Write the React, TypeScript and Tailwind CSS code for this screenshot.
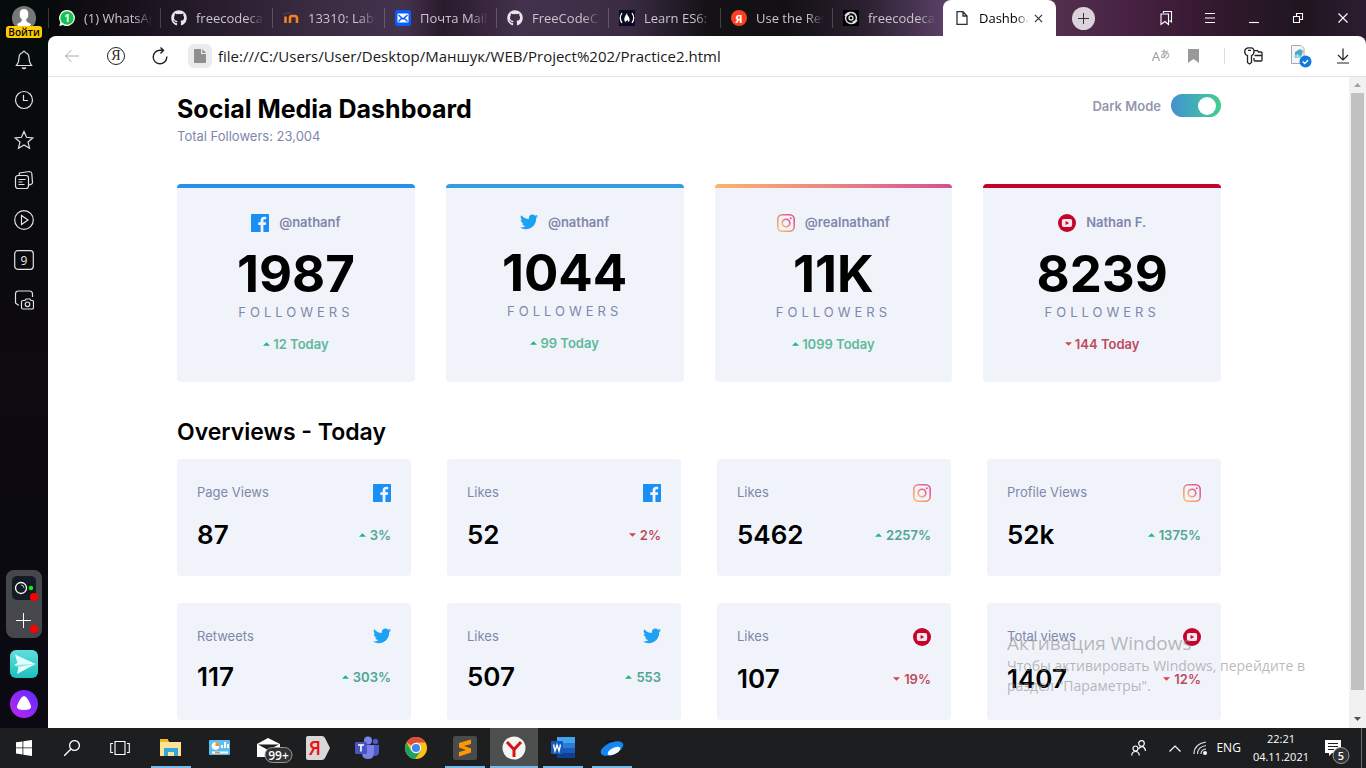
import type { ReactNode } from "react";
import { FaGithub } from "react-icons/fa";

type Network = "facebook" | "twitter" | "instagram" | "youtube";

function NetworkIcon({ name }: { name: Network }) {
  if (name === "facebook")
    return (
      <svg className="w-[18px] shrink-0" viewBox="0 0 20 20" aria-hidden="true">
        <path fill="#198ff5" d="M18.896 0H1.104C.494 0 0 .494 0 1.104v17.793C0 19.506.494 20 1.104 20h9.58v-7.745H8.076V9.237h2.606V7.01c0-2.583 1.578-3.99 3.883-3.99 1.104 0 2.052.082 2.329.119v2.7h-1.598c-1.254 0-1.496.597-1.496 1.47v1.928h2.989l-.39 3.018h-2.6V20h5.098c.608 0 1.102-.494 1.102-1.104V1.104C20 .494 19.506 0 18.896 0z" />
      </svg>
    );
  if (name === "twitter")
    return (
      <svg className="h-4 w-[18px] shrink-0" viewBox="0 0 20 17" aria-hidden="true">
        <path fill="#1da1f2" d="M20 2.172a8.192 8.192 0 01-2.357.646 4.11 4.11 0 001.805-2.27 8.22 8.22 0 01-2.606.996A4.096 4.096 0 0013.847.248c-2.65 0-4.596 2.472-3.998 5.037A11.648 11.648 0 011.392 1 4.109 4.109 0 002.662 6.478 4.086 4.086 0 01.8 5.963c-.045 1.901 1.318 3.679 3.291 4.075a4.113 4.113 0 01-1.853.07 4.106 4.106 0 003.833 2.849A8.25 8.25 0 010 14.658a11.616 11.616 0 006.29 1.843c7.618 0 11.922-6.434 11.662-12.205A8.354 8.354 0 0020 2.172z" />
      </svg>
    );
  if (name === "instagram")
    return (
      <svg className="w-[18px] shrink-0" viewBox="0 0 20 20" aria-hidden="true">
        <defs>
          <linearGradient id="insta" x1="0" y1="1" x2="1" y2="0">
            <stop offset="0" stopColor="#fdc468" />
            <stop offset="1" stopColor="#df4996" />
          </linearGradient>
        </defs>
        <g fill="none" stroke="url(#insta)" strokeWidth="1.8">
          <rect x="0.9" y="0.9" width="18.2" height="18.2" rx="5" />
          <circle cx="10" cy="10" r="4.2" />
        </g>
        <circle cx="15.3" cy="4.7" r="1.2" fill="#e2608c" />
      </svg>
    );
  return (
    <svg className="w-[18px] shrink-0" viewBox="0 0 20 20" aria-hidden="true">
      <circle cx="10" cy="10" r="10" fill="#c4032a" />
      <rect x="4.3" y="5.6" width="11.4" height="8.8" rx="2.2" fill="#f5e6ee" />
      <path d="M8.5 7.7v4.6l3.8-2.3z" fill="#c4032a" />
    </svg>
  );
}

function Arrow({ up }: { up: boolean }) {
  return (
    <svg className="h-1 w-[7px] shrink-0" viewBox="0 0 8 4" aria-hidden="true">
      <path d={up ? "M0 4h8L4 0z" : "M0 0h8L4 4z"} fill={up ? "#1eb589" : "#dc414c"} />
    </svg>
  );
}

const followerCards: { network: Network; handle: string; count: string; change: string; up: boolean; bar: string }[] = [
  { network: "facebook", handle: "@nathanf", count: "1987", change: "12 Today", up: true, bar: "bg-[#288fe8]" },
  { network: "twitter", handle: "@nathanf", count: "1044", change: "99 Today", up: true, bar: "bg-[#349ce0]" },
  { network: "instagram", handle: "@realnathanf", count: "11K", change: "1099 Today", up: true, bar: "bg-linear-to-r from-[#fdb26c] to-[#d54f92]" },
  { network: "youtube", handle: "Nathan F.", count: "8239", change: "144 Today", up: false, bar: "bg-[#c4032a]" },
];

const overviewCards: { network: Network; label: string; value: string; change: string; up: boolean }[] = [
  { network: "facebook", label: "Page Views", value: "87", change: "3%", up: true },
  { network: "facebook", label: "Likes", value: "52", change: "2%", up: false },
  { network: "instagram", label: "Likes", value: "5462", change: "2257%", up: true },
  { network: "instagram", label: "Profile Views", value: "52k", change: "1375%", up: true },
  { network: "twitter", label: "Retweets", value: "117", change: "303%", up: true },
  { network: "twitter", label: "Likes", value: "507", change: "553", up: true },
  { network: "youtube", label: "Likes", value: "107", change: "19%", up: false },
  { network: "youtube", label: "Total views", value: "1407", change: "12%", up: false },
];

function Dashboard() {
  return (
    <main className="min-w-0 flex-1 overflow-hidden pr-32 pl-[129px] pt-4 font-['Inter',sans-serif]">
      <header className="flex items-start justify-between">
        <div>
          <h1 className="text-[25px] leading-8 font-bold text-black">Social Media Dashboard</h1>
          <p className="mt-[3px] text-[13px] leading-4 text-[#8087ab]">Total Followers: 23,004</p>
        </div>
        <div className="mt-px flex items-center gap-[10px]">
          <label htmlFor="dark" className="text-[13px] leading-4 font-semibold text-[#9497af]">Dark Mode</label>
          <input
            id="dark"
            type="checkbox"
            defaultChecked
            className="flex h-[23px] w-[50px] appearance-none items-center rounded-full bg-linear-to-r from-[#4491cf] to-[#43cd91] px-[5px] before:size-[18px] before:rounded-full before:bg-white before:content-[''] checked:justify-end"
          />
        </div>
      </header>

      <section className="mt-10 grid grid-cols-4 gap-[31px]">
        {followerCards.map((c) => (
          <article key={c.network} className="flex flex-col overflow-hidden rounded-[4px] bg-[#f0f3fa] text-center">
            <div className={`h-1 ${c.bar}`} />
            <div className="flex flex-col items-center px-5 pt-[26px] pb-[30px]">
              <div className="flex items-start gap-[10px]">
                <NetworkIcon name={c.network} />
                <span className="text-[13px] leading-[17px] font-semibold text-[#8087ab]">{c.handle}</span>
              </div>
              <strong className="mt-3 text-[51px] leading-[60px] font-bold text-black">{c.count}</strong>
              <span className="text-[13px] leading-4 tracking-[4px] text-[#8087ab]">FOLLOWERS</span>
              <span className={`mt-4 flex items-center gap-[3px] text-[13px] leading-4 font-semibold ${c.up ? "text-[#5fb99a]" : "text-[#bf4a5c]"}`}>
                <Arrow up={c.up} />
                {c.change}
              </span>
            </div>
          </article>
        ))}
      </section>

      <h2 className="mt-9 text-[23px] leading-7 font-semibold text-black">Overviews - Today</h2>
      <section className="mt-[13px] grid grid-cols-4 gap-x-9 gap-y-[27px]">
        {overviewCards.map((c) => (
          <article key={c.label + c.value} className="rounded-[4px] bg-[#f0f3fa] px-5 py-[25px]">
            <div className="flex items-start justify-between">
              <span className="text-[13px] leading-4 text-[#8087ab]">{c.label}</span>
              <NetworkIcon name={c.network} />
            </div>
            <div className="mt-[17px] flex items-center justify-between">
              <strong className="text-[26px] leading-8 font-semibold text-black">{c.value}</strong>
              <span className={`flex items-center gap-1 text-[13px] leading-4 font-semibold ${c.up ? "text-[#4da593]" : "text-[#bf4a5c]"}`}>
                <Arrow up={c.up} />
                {c.change}
              </span>
            </div>
          </article>
        ))}
      </section>
    </main>
  );
}

const tabs: { title: string; icon: ReactNode }[] = [
  {
    title: "(1) WhatsApp",
    icon: (
      <svg viewBox="0 0 16 16" className="size-4">
        <path d="M8 0a8 8 0 11-4 15L.3 16l1-3.8A8 8 0 018 0z" fill="#fff" />
        <circle cx="8" cy="8" r="6.7" fill="#16c350" />
        <text x="8" y="11.7" textAnchor="middle" fontSize="10" fontWeight="700" fill="#fff">1</text>
      </svg>
    ),
  },
  { title: "freecodecamp", icon: <FaGithub className="size-4 text-[#e8e6ea]" /> },
  {
    title: "13310: Lab9",
    icon: (
      <svg viewBox="0 0 16 16" className="size-4" fill="none">
        <path d="M0 5l3-2h5" stroke="#4a3c3c" strokeWidth="1.5" />
        <path d="M2.500 13V6.500M7 13V8q0-2 2-2h2.500q2.500 0 2.500 2.500V13" stroke="#f58220" strokeWidth="2.600" />
      </svg>
    ),
  },
  {
    title: "Почта Mail.ru",
    icon: (
      <svg viewBox="0 0 16 16" className="size-4">
        <rect width="16" height="16" rx="2.500" fill="#0a5cff" />
        <rect x="2.500" y="3.500" width="11" height="9" rx="1" fill="#fff" />
        <path d="M3.500 5l4.500 4 4.500-4M3.500 11.500l3-3M12.500 11.500l-3-3" stroke="#0a5cff" strokeWidth="1.400" fill="none" />
      </svg>
    ),
  },
  { title: "FreeCodeCamp", icon: <FaGithub className="size-4 text-[#e8e6ea]" /> },
  {
    title: "Learn ES6: Use",
    icon: (
      <svg viewBox="0 0 16 16" className="size-4">
        <rect width="16" height="16" fill="#0a0a23" />
        <path d="M3 3Q-.5 8 3 13M13 3q3.500 5 0 10" stroke="#fff" strokeWidth="1.300" fill="none" />
        <path d="M8 3q0 2 1.500 3.500T10.500 11L9 12.500q.8-1.500-.5-2.500-.5 1-1.300 1-.6.5 0 1.500-2-.8-2-3T8 3z" fill="#fff" />
      </svg>
    ),
  },
  {
    title: "Use the Rest",
    icon: <span className="flex size-4 items-center justify-center rounded-full bg-[#fc3f1d] text-[11px] leading-none font-bold text-white">Я</span>,
  },
  {
    title: "freecodecamp",
    icon: (
      <svg viewBox="0 0 16 16" className="size-4" fill="none">
        <rect width="16" height="16" fill="#000" />
        <circle cx="8" cy="8" r="2" stroke="#ddd" strokeWidth="1.400" />
        <path d="M2 6Q4 2 8.500 2.500T13.500 8Q13 11.500 9.500 12M14 10q-2 4-6.500 3.500T2.500 8Q3 4.500 6.500 4" stroke="#ddd" strokeWidth="1.500" />
      </svg>
    ),
  },
];

function TabStrip() {
  return (
    <div className="flex h-9 items-stretch">
      {tabs.map((t, i) => (
        <button key={i} type="button" className="flex w-28 items-center text-left">
          <span className="h-5 w-px bg-white/20" />
          <span className="ml-[10px]">{t.icon}</span>
          <span className="ml-[9px] w-[68px] overflow-hidden mask-r-from-75% text-[13px] leading-5 whitespace-nowrap text-[#c9c3cd]">{t.title}</span>
        </button>
      ))}
      <div className="-ml-px flex w-[113px] items-center rounded-t-lg bg-white">
        <svg viewBox="0 0 12 14" className="ml-[13px] h-[14px] w-3 shrink-0" fill="none" stroke="#26323e" strokeWidth="1.300">
          <path d="M1 .7h6l4 4.300v8.300H1zM7 .7V5h4" />
        </svg>
        <span className="ml-[11px] w-[50px] overflow-hidden mask-r-from-75% text-[13px] leading-5 whitespace-nowrap text-black">Dashboard</span>
        <button type="button" aria-label="Close tab" className="ml-[5px]">
          <svg viewBox="0 0 10 10" className="size-[9px]" stroke="#26323e" strokeWidth="1.300"><path d="M1 1l8 8M9 1L1 9" /></svg>
        </button>
      </div>
      <button type="button" aria-label="New tab" className="ml-4 flex size-[23px] items-center justify-center self-center rounded-full bg-[#dbd3dc]">
        <svg viewBox="0 0 11 11" className="size-[11px]" stroke="#333" strokeWidth="1"><path d="M5.500 0v11M0 5.500h11" /></svg>
      </button>
      <div className="ml-auto flex items-center pr-[15px] text-white">
        {[
          ["Bookmarks", "M5.500 3V1.500h8v10.500l-2-1.500M3 4h7.500v10.500L7 11.500l-4 3z"],
          ["Menu", "M3 3.500h10M3 8h10M3 12.500h10"],
          ["Minimize", "M3 12.500h10"],
          ["Restore", "M6.500 6V3.500h6v6H10M3.500 6.500h6v6h-6z"],
          ["Close", "M3.500 3.500l9 9M12.500 3.500l-9 9"],
        ].map(([label, d]) => (
          <button key={label} type="button" aria-label={label} className="flex w-11 justify-center last:w-auto last:pl-[15px]">
            <svg viewBox="0 0 16 16" className="size-4" fill="none" stroke="currentColor" strokeWidth="1.1"><path d={d} /></svg>
          </button>
        ))}
      </div>
    </div>
  );
}

function Toolbar() {
  return (
    <div className="flex h-[41px] shrink-0 items-center border-b border-[#e3e3e3] pr-[16px] pl-4">
      <button type="button" aria-label="Back" className="w-4">
        <svg viewBox="0 0 16 16" className="size-4" fill="none" stroke="#aaa"><path d="M15 8H1.500M7.500 2l-6 6 6 6" /></svg>
      </button>
      <button type="button" aria-label="Yandex home" className="ml-[27px] flex size-[18px] items-center justify-center rounded-full border border-[#222] font-['Liberation_Serif',serif] text-[14px] leading-none text-[#222]">Я</button>
      <button type="button" aria-label="Reload" className="ml-[26px]">
        <svg viewBox="0 0 18 18" className="size-[18px]" fill="none" stroke="#222" strokeWidth="1.400"><path d="M15.800 9.500A6.800 6.800 0 119 3.200h3M9.500.5L12.500 3.200 9.500 6.500" /></svg>
      </button>
      <span className="ml-[19px] flex size-6 items-center justify-center rounded-md bg-[#ebebeb]">
        <svg viewBox="0 0 12 14" className="h-[14px] w-3" fill="#8f8f8f"><path d="M1 0h6v5h5v8q0 1-1 1H1q-1 0-1-1V1q0-1 1-1zM8.300 0L12 4H8.300z" /></svg>
      </span>
      <input
        aria-label="Address"
        defaultValue="file:///C:/Users/User/Desktop/Маншук/WEB/Project%202/Practice2.html"
        className="ml-[6px] min-w-0 flex-1 text-[15px] leading-6 text-[#1a1a1a] outline-none"
      />
      <button type="button" aria-label="Translate" className="flex items-end text-[13px] leading-4 text-[#999]">
        A<span className="mb-1 font-['Noto_Sans_CJK_JP',sans-serif] text-[10px] leading-[12px]">あ</span>
      </button>
      <button type="button" aria-label="Bookmark" className="ml-[18px]">
        <svg viewBox="0 0 11 14" className="h-[14px] w-[11px]" fill="#999"><path d="M0 0h11v14l-5.500-4L0 14z" /></svg>
      </button>
      <span className="ml-[25px] h-4 w-px bg-[#ddd]" />
      <button type="button" aria-label="Passwords" className="ml-[19px]">
        <svg viewBox="0 0 19 18" className="h-[18px] w-[19px]" fill="none" stroke="#222" strokeWidth="1.300">
          <path d="M3.500 8.500Q.7 7.500.7 4.500T4 .8h3Q10 1 10 4.500 10 7.500 7.500 8.500v7L5.500 17l-2-1.500zM4 3.300h3M10 3.700h3.500l1 1.300h2.500q1 0 1 1V13q0 1-1 1h-6q-1 0-1-1v-2M18 8.500h-7.500" />
        </svg>
      </button>
      <button type="button" aria-label="Documents" className="ml-[27px]">
        <svg viewBox="0 0 22 23" className="h-[23px] w-[22px]" fill="none">
          <path d="M1.500.5H11l3 3V18.500h-12.500z" fill="#f5f5f5" stroke="#aaa" />
          <path d="M5 7l5-3 3 2-2 6-6 1z" fill="#4aa8c8" />
          <path d="M3 11l5-2 3 3-4 1z" fill="#9ad8e8" />
          <circle cx="15.500" cy="16.500" r="6" fill="#0d7ade" />
          <path d="M12.700 16.500l2 2 3.500-3.500" stroke="#fff" strokeWidth="1.400" />
        </svg>
      </button>
      <button type="button" aria-label="Downloads" className="ml-6">
        <svg viewBox="0 0 14 16" className="h-4 w-[14px]" fill="none" stroke="#222" strokeWidth="1.200"><path d="M7 .5v11.500M2 7l5 5 5-5M1 15h12" /></svg>
      </button>
    </div>
  );
}

const sideIcons: { label: string; art: ReactNode }[] = [
  { label: "Notifications", art: <path d="M2.500 15.500q2.500-3 2.500-7.500 0-4.500 3.800-5.500.2-1.500 1.200-1.500t1.200 1.500Q15 3.500 15 8q0 4.500 2.500 7.500zM8 17.500q2 2 4 0" /> },
  { label: "History", art: <><circle cx="10" cy="10" r="8.500" /><path d="M9.500 5v5.500H14" /></> },
  { label: "Favorites", art: <path d="M10 1.500l2.500 5.800 6.300.6-4.800 4.100 1.500 6.200L10 15l-5.500 3.200L6 12 1.200 7.900l6.300-.6z" /> },
  { label: "Collections", art: <><rect x="1.500" y="5.500" width="13" height="13" rx="2.500" /><path d="M5 5l.5-2 10-1.500q2 0 2.300 2l.7 9q0 2-4 2.500M4.500 9.500h7M4.500 12h4M4.500 14.500h6" /></> },
  { label: "Video", art: <><circle cx="10" cy="10" r="9.300" /><path d="M7.500 5.500v9l6.500-4.500z" /></> },
  { label: "Services", art: <><rect x=".7" y=".7" width="18.600" height="18.600" rx="3" /><text x="10" y="14.500" textAnchor="middle" fontSize="12" fill="#e8e8e8" stroke="none">9</text></> },
  { label: "Screenshot", art: <><path d="M5 15H4l-2.500-2V4Q1.500 1 4.500 1h11q3 0 3 3v3" /><path d="M7.500 12q0-1.500 1.500-1.500h2l1-1.500h4l1 1.500h1q1.500 0 1.500 1.500v5.500q0 1.500-1.500 1.500H9q-1.500 0-1.500-1.500z" /><circle cx="13.500" cy="14.300" r="2.300" /></> },
];

function Sidebar() {
  return (
    <aside className="flex w-12 shrink-0 flex-col items-center bg-linear-to-b from-[#050b0a] via-[#0d0a10] to-[#0b0a12] pt-[6px]">
      <button type="button" className="flex flex-col items-center">
        <svg viewBox="0 0 24 20" className="h-5 w-6">
          <path d="M0 12a12 12 0 0124 0q0 5-3 8H3q-3-3-3-8z" fill="#777" />
          <path d="M12 3q4 0 4.300 4.500T14 13.500q0 2.500 5 4.500l-1 2H6l-1-2q5-2 5-4.500-2.500-1.500-2.300-6T12 3z" fill="#fff" />
        </svg>
        <span className="rounded-[3px] bg-[#fc0] px-[2px] text-[10px] leading-3 font-semibold text-black">Войти</span>
      </button>
      <nav className="mt-3 flex flex-col gap-5">
        {sideIcons.map((s) => (
          <button key={s.label} type="button" aria-label={s.label}>
            <svg viewBox="0 0 20 20" className="size-5" fill="none" stroke="#e3e3e3" strokeWidth="1.200">{s.art}</svg>
          </button>
        ))}
      </nav>
      <div className="mt-auto flex h-[68px] w-9 flex-col items-center rounded-lg bg-[#46464d] pt-[6px]">
        <svg viewBox="0 0 28 60" className="ml-1 h-[60px] w-7">
          <rect width="24" height="24" rx="5" fill="#131c24" />
          <circle cx="9" cy="12" r="5.500" fill="none" stroke="#fff" strokeWidth="1.300" />
          <path d="M9 9a3 3 0 013 3" fill="none" stroke="#bbb" />
          <circle cx="19" cy="12" r="2.200" fill="#0df20d" />
          <circle cx="22" cy="21" r="4" fill="#f00" />
          <path d="M11.500 37v15M4 44.500h15" stroke="#fff" />
          <circle cx="22" cy="53" r="4" fill="#f00" />
        </svg>
      </div>
      <svg viewBox="0 0 28 28" className="mt-3 size-7">
        <defs><linearGradient id="mint" x2="0" y2="1"><stop stopColor="#5ee0dc" /><stop offset="1" stopColor="#1ebfbd" /></linearGradient></defs>
        <rect width="28" height="28" rx="6" fill="url(#mint)" />
        <path d="M5 4.500L25.500 14 7 24l1.500-7L4 15l3.500-2z" fill="#e6fffd" />
        <path d="M4 15l21.500-1L8.500 17z" fill="#8ce8e4" />
      </svg>
      <svg viewBox="0 0 28 28" className="mt-3 mb-[10px] size-7">
        <defs><linearGradient id="alice" x1="1" x2="0" y2="1"><stop stopColor="#5b2bff" /><stop offset="1" stopColor="#c026f0" /></linearGradient></defs>
        <circle cx="14" cy="14" r="14" fill="url(#alice)" />
        <path d="M14 6q2 0 4 3.500t3 6.500q1 4-7 4t-7-4q1-3 3-6.500T14 6z" fill="#fff" />
      </svg>
    </aside>
  );
}

const taskbarApps: { label: string; open: boolean; active?: boolean; art: ReactNode }[] = [
  { label: "File Explorer", open: true, art: <><path d="M1 4h8l1 2h12v14H1z" fill="#fde293" /><path d="M1 3h8v3H1z" fill="#f5b91f" /><path d="M5 20v-8h14v8h-4v-4H9v4z" fill="#2fa8e0" /></> },
  { label: "Control Panel", open: false, art: <><rect x="1" y="4" width="21" height="15" rx="1" fill="#5bc0f0" /><circle cx="7.500" cy="10" r="3.800" fill="#fff" /><path d="M7.500 10V6.200a3.800 3.800 0 013.800 3.800z" fill="#f09020" /><path d="M14 12V9M17 12V6M20 12V8M4 16.500h16" stroke="#fff" strokeWidth="2" /><path d="M7 16.500h5" stroke="#f09020" strokeWidth="1.500" /></> },
  { label: "Mail", open: false, art: <><path d="M0 8l11-6 12 6v13H0z" fill="#fff" /><path d="M1 8.500h21L11 14z" fill="#1f1f1f" /><rect x="8" y="11.500" width="27" height="15" rx="7.500" fill="#333" stroke="#999" /><text x="21.500" y="23.500" textAnchor="middle" fontSize="12" fontWeight="600" fill="#fff">99+</text></> },
  { label: "Yandex", open: false, art: <><path d="M2 0h14q2 0 3 2l5 10-5 10q-1 2-3 2H2q-2 0-2-2V2q0-2 2-2z" fill="#d8d8d8" /><text x="9" y="18.500" textAnchor="middle" fontSize="19" fontWeight="600" fill="#e11">Я</text></> },
  { label: "Teams", open: false, art: <><circle cx="13" cy="4.500" r="4" fill="#7b83eb" /><circle cx="20.500" cy="5.500" r="2.700" fill="#5059c9" /><path d="M17 9h7v7q0 4-5 4z" fill="#5059c9" /><path d="M7 9h12v8q0 6-6 6t-6-6z" fill="#7b83eb" /><rect y="6" width="12" height="12" rx="1" fill="#4b53bc" /><path d="M3 9h6M6 9v6.500" stroke="#fff" strokeWidth="1.600" /></> },
  { label: "Chrome", open: false, art: <><circle cx="12" cy="12" r="11" fill="#fbc116" /><path d="M12 12L2.500 6.500A11 11 0 0121.500 6.500H12z" fill="#de4c3f" /><path d="M2.500 6.500A11 11 0 0011 23l6-8.500L12 12 7.200 14.700z" fill="#1da261" /><circle cx="12" cy="12" r="5.200" fill="#fff" /><circle cx="12" cy="12" r="4.100" fill="#4285f4" /></> },
  { label: "Sublime Text", open: true, art: <><rect width="24" height="24" rx="2" fill="#4a4a4a" /><path d="M6 7l12-3.500v4.500l-7 2 7 2.500v4L6 20.500V16l7-2-7-2.500z" fill="#ff9800" /></> },
  { label: "Yandex Browser", open: true, active: true, art: <><circle cx="12" cy="12" r="11.500" fill="#f4f4f4" /><path d="M5 6l7 7.500 7-7.500M12 13v8" fill="none" stroke="#d51515" strokeWidth="3" /></> },
  { label: "Word", open: true, art: <><path d="M6 1h18v6H6z" fill="#41a5ee" /><path d="M6 7h18v5H6z" fill="#2b7cd3" /><path d="M6 12h18v5H6z" fill="#185abd" /><path d="M6 17h18v5H6z" fill="#103f91" /><rect y="5" width="12" height="13" rx="1" fill="#185abd" /><path d="M2.500 8.500l1.500 6.500 2-6 2 6 1.500-6.500" fill="none" stroke="#fff" strokeWidth="1.400" /></> },
  { label: "Yandex Disk", open: true, art: <><ellipse cx="12" cy="12.500" rx="12" ry="6" transform="rotate(-24 12 12.500)" fill="#1585f5" /><ellipse cx="14" cy="15" rx="7" ry="3.200" transform="rotate(-28 14 15)" fill="#f1f9ff" /><path d="M5 7.500q3-4 8-3.500l1 1.500Q9 5.500 5 7.500z" fill="#0a121c" /></> },
];

function Taskbar() {
  return (
    <footer className="flex h-10 shrink-0 items-stretch bg-[#1d1e1f] text-white">
      <button type="button" aria-label="Start" className="flex w-12 items-center justify-center">
        <svg viewBox="0 0 16 16" className="size-4" fill="#fff"><path d="M0 2.300l6.500-.9v6.100H0zM7.300 1.300L16 0v7.500H7.300zM0 8.300h6.500v6.200L0 13.600zM7.300 8.300H16V16l-8.700-1.300z" /></svg>
      </button>
      <button type="button" aria-label="Search" className="flex w-12 items-center justify-center">
        <svg viewBox="0 0 16 16" className="size-4" fill="none" stroke="#fff" strokeWidth="1.300"><circle cx="10.500" cy="5.500" r="4.900" /><path d="M7 9L0 16" /></svg>
      </button>
      <button type="button" aria-label="Task view" className="flex w-12 items-center justify-center">
        <svg viewBox="0 0 20 14" className="h-[14px] w-5" fill="none" stroke="#fff" strokeWidth="1.100"><path d="M5 .5h10v13H5zM3 2.500H.7v9H3M17 2.500h2.300v9H17" /></svg>
      </button>
      <div className="ml-[3px] flex gap-px">
        {taskbarApps.map((a) => (
          <button
            key={a.label}
            type="button"
            aria-label={a.label}
            className={`flex w-12 flex-col items-center justify-between pt-2 ${a.active ? "bg-[#4d4e4e]" : ""}`}
          >
            <svg viewBox="0 0 24 24" className="size-6 overflow-visible">{a.art}</svg>
            {a.open && <span className={`h-[2px] bg-[#76b9ed] ${a.active ? "w-full" : "w-10"}`} />}
          </button>
        ))}
      </div>
      <div className="ml-auto flex items-center">
        <svg viewBox="0 0 16 16" className="size-4" fill="none" stroke="#fff" strokeWidth="1.200"><circle cx="10.500" cy="3.500" r="2.800" /><path d="M7.500 9q3-4 5.500-1.500 1.500 1.500 1.500 3.500" /><circle cx="4.500" cy="8.500" r="2.500" /><path d="M.7 15.500q.3-4 3.800-4t3.800 4" /></svg>
        <svg viewBox="0 0 12 7" className="ml-[22px] h-[7px] w-3" fill="none" stroke="#fff" strokeWidth="1.200"><path d="M.5 6.500L6 1l5.500 5.500" /></svg>
        <svg viewBox="0 0 14 14" className="ml-3 size-[14px]" fill="none" stroke="#ddd" strokeWidth="1.100"><path d="M1 13Q1 3 13 1M4.500 13Q4.500 6 13 4.500M8 13q0-4.500 5-5" /><circle cx="12" cy="12" r="1.500" fill="#fff" /></svg>
        <span className="ml-[9px] text-[12px] leading-4">ENG</span>
        <time className="ml-3 text-center text-[11px] leading-[18px]">22:21<br />04.11.2021</time>
        <button type="button" aria-label="5 notifications" className="mt-2 ml-4 flex">
          <svg viewBox="0 0 25 24" className="h-6 w-[25px]">
            <path d="M0 0h16v13H7l-3 3v-3H0z" fill="#fff" />
            <path d="M3 3.500h10M3 6.500h10M3 9.500h6" stroke="#1d1e1f" strokeWidth="1.200" />
            <circle cx="16" cy="15.500" r="8" fill="#333" stroke="#999" />
            <text x="16" y="19.500" textAnchor="middle" fontSize="11" fontWeight="600" fill="#fff">5</text>
          </svg>
        </button>
        <span className="ml-[11px] h-10 w-px bg-[#6a6a6a]" />
        <span className="w-1" />
      </div>
    </footer>
  );
}

export default function App() {
  return (
    <div className="relative flex h-screen flex-col overflow-hidden bg-[#0b0a12] font-['Open_Sans','Noto_Sans',sans-serif]">
      <div className="flex min-h-0 flex-1">
        <Sidebar />
        <div className="flex min-w-0 flex-1 flex-col bg-[linear-gradient(90deg,#08090b_0%,#150f18_5%,#3a2b41_20%,#44324d_27%,#2a1a2c_30%,#44324d_36%,#3a2b42_44%,#151217_50%,#131015_56%,#2b2130_62%,#5a4066_68%,#54304f_76%,#452040_83%,#2e1729_90%,#1f1620_95%,#2c1c30_100%)]">
          <TabStrip />
          <div className="flex min-h-0 flex-1 flex-col rounded-t-lg bg-white">
            <Toolbar />
            <div className="flex min-h-0 flex-1">
              <Dashboard />
              <div className="flex w-[17px] shrink-0 flex-col items-center bg-[#f1f1f1]" aria-hidden="true">
                <svg viewBox="0 0 7 16" className="h-4 w-[7px]"><path d="M0 10h7L3.500 6z" fill="#a3a3a3" /></svg>
                <div className="w-[13px] flex-1 bg-[#c1c1c1]" />
                <svg viewBox="0 0 7 38" className="h-[38px] w-[7px]"><path d="M0 27h7l-3.500 4z" fill="#505050" /></svg>
              </div>
            </div>
          </div>
        </div>
      </div>
      <Taskbar />
      <div className="pointer-events-none absolute right-[45px] bottom-[72px] w-[314px] text-[14px] leading-5 whitespace-nowrap text-[#8c8c8c]/60">
        <p className="text-[19px] leading-[26px]">Активация Windows</p>
        <p>Чтобы активировать Windows, перейдите в</p>
        <p>раздел "Параметры".</p>
      </div>
    </div>
  );
}
